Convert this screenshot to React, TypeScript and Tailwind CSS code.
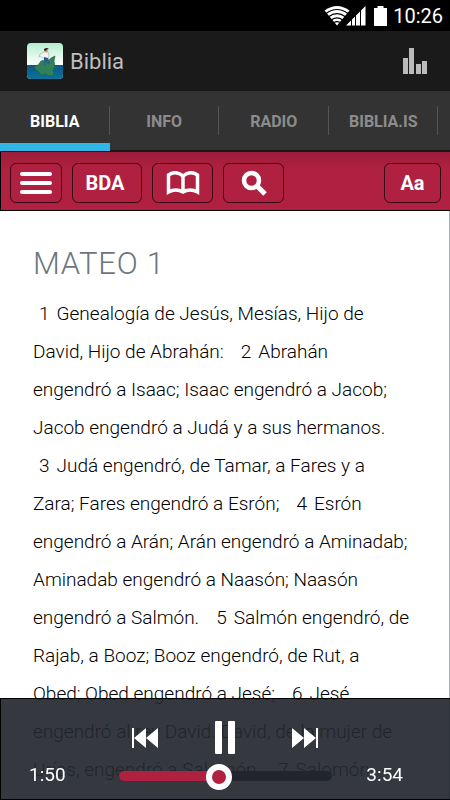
import { useState } from "react";

const tabs = ["BIBLIA", "INFO", "RADIO", "BIBLIA.IS"];

// Each line holds its pieces in order, numbers are verse markers
const lines: (string | number)[][] = [
  [1, "Genealogía de Jesús, Mesías, Hijo de"],
  ["David, Hijo de Abrahán:", 2, "Abrahán"],
  ["engendró a Isaac; Isaac engendró a Jacob;"],
  ["Jacob engendró a Judá y a sus hermanos."],
  [3, "Judá engendró, de Tamar, a Fares y a"],
  ["Zara; Fares engendró a Esrón;", 4, "Esrón"],
  ["engendró a Arán; Arán engendró a Aminadab;"],
  ["Aminadab engendró a Naasón; Naasón"],
  ["engendró a Salmón.", 5, "Salmón engendró, de"],
  ["Rajab, a Booz; Booz engendró, de Rut, a"],
  ["Obed; Obed engendró a Jesé;", 6, "Jesé"],
  ["engendró al rey David. David, de la mujer de"],
  ["Urías, engendró a Salomón.", 7, "Salomón"],
  ["engendró a Roboán; Roboán engendró a"],
];

const toolButton =
  "flex h-10 items-center justify-center rounded-md border border-[#3a0814] bg-[#b02040] text-xl font-bold text-white";

const StatusBar = () => (
  <div className="flex h-[31px] shrink-0 items-center justify-end bg-black pr-[7px] text-white">
    <svg width="26" height="20" viewBox="0 0 26 20" fill="none" stroke="#fff" aria-hidden="true">
      <path d="M13 19.5 0.5 4.5Q13 -4.5 25.5 4.5Z" fill="#fff" stroke="none" />
      <path d="M2 7.5Q13 -0.5 24 7.5M4.5 10.7Q13 4.5 21.5 10.7M7.5 13.8Q13 10 18.5 13.8M10 16.6Q13 14.8 16 16.6" stroke="#000" strokeWidth="1.2" />
    </svg>
    <svg className="-ml-1" width="20" height="20" viewBox="0 0 20 20" aria-hidden="true">
      <path d="M0 19.5 19.5 0V19.5Z" fill="#fff" />
      <path d="M5.5 10V20M9.5 6V20M14.5 2V20" stroke="#000" strokeWidth="1" />
    </svg>
    <svg className="ml-2" width="13" height="20" viewBox="0 0 13 20" fill="#fff" aria-hidden="true">
      <path d="M3.5 0h6v2H13v18H0V2h3.500z" />
    </svg>
    <span className="ml-[6px] text-xl">10:26</span>
  </div>
);

const AppIcon = () => (
  <svg className="rounded-sm" width="36" height="36" viewBox="0 0 36 36" aria-hidden="true">
    <defs>
      <linearGradient id="sky" x1="0" y1="0" x2="0" y2="1">
        <stop offset="0" stopColor="#b4edcf" />
        <stop offset="0.6" stopColor="#fff" />
      </linearGradient>
      <linearGradient id="sea" x1="0" y1="0" x2="0" y2="1">
        <stop offset="0" stopColor="#075a86" />
        <stop offset="1" stopColor="#0f7099" />
      </linearGradient>
    </defs>
    <path d="M0 0h36v36H0z" fill="url(#sky)" />
    <path d="M0 22h36v14H0z" fill="url(#sea)" />
    <path d="m7 24 4-2 3-4 4-1 3 1 3-3 4-2-1 5 1 5-2 4 1 5-4 1-5-2-4 1-3-4-2-1z" fill="#2f8258" stroke="#1e6544" strokeWidth="0.6" />
    <path d="m17 9 4 0 1 4-1 3-4-1-1 0-3-2-1 1 1-3z" fill="#f4f4f4" stroke="#8e9495" strokeWidth="0.5" />
    <path d="m17 14 4 1 2 5-1 2-3-4-1 5-1-1z" fill="#2a5c8d" />
    <circle cx="19" cy="7.500" r="1.700" fill="#c7906b" />
    <path d="M17 7Q17 5 20 5L22 6 20 6.500 18 8z" fill="#2a1c17" />
  </svg>
);

const App = () => {
  const [activeTab, setActiveTab] = useState("BIBLIA");
  const [playing, setPlaying] = useState(true);
  const [position, setPosition] = useState(110);
  const percent = (position / 234) * 100;

  return (
    <div className="flex h-screen flex-col overflow-hidden bg-white font-[Roboto,sans-serif]">
      <StatusBar />
      <header className="flex h-[60px] shrink-0 items-center bg-[#1a1a1a] pr-[22px] pl-[27px]">
        <AppIcon />
        <h1 className="ml-[7px] text-[22px] text-[#bebebe]">Biblia</h1>
        <button className="ml-auto" aria-label="Ecualizador">
          <svg width="26" height="28" viewBox="0 0 26 28" fill="#bbb">
            <path d="M1 11h5v16H1zM7 1h5v26H7zM14 17h5v10h-5zM20 14h5v13h-5z" />
          </svg>
        </button>
      </header>

      <nav className="flex h-[61px] shrink-0 border-b-2 border-[#181818] bg-[#333] pr-3">
        {tabs.map((tab) => (
          <button
            key={tab}
            onClick={() => setActiveTab(tab)}
            className={`relative flex flex-1 items-center justify-center pt-[3px] text-base font-bold ${
              tab === activeTab ? "text-white" : "text-[#8c8c8c]"
            }`}
          >
            {tab}
            <span className="absolute inset-y-[15px] right-0 w-px bg-[#555]" />
            {tab === activeTab && <span className="absolute inset-x-0 -bottom-px h-2 bg-[#33b5e5]" />}
          </button>
        ))}
      </nav>

      <div className="flex h-[59px] shrink-0 items-center gap-[10px] border-b border-l border-black bg-linear-to-b from-[#9c1d39] to-[#b02040] to-30% pt-[3px] pr-[9px] pl-[9px]">
        <button className={`${toolButton} w-[52px]`} aria-label="Menú">
          <svg width="32" height="24" viewBox="0 0 32 24" stroke="#fff" strokeWidth="4" strokeLinecap="round">
            <path d="M2 3h28M2 12h28M2 21h28" />
          </svg>
        </button>
        <button className={`${toolButton} w-[70px] pr-1`}>BDA</button>
        <button className={`${toolButton} w-[61px]`} aria-label="Libros">
          <svg width="34" height="24" viewBox="0 0 34 24" fill="none" stroke="#fff" strokeWidth="3.500">
            <path d="M17 5Q10-1 2.500 4V21Q10 17 17 21Q24 17 31.500 21V4Q24-1 17 5V21" />
          </svg>
        </button>
        <button className={`${toolButton} w-[61px]`} aria-label="Buscar">
          <svg width="26" height="26" viewBox="0 0 26 26" fill="none" stroke="#fff">
            <circle cx="10.500" cy="10.500" r="7.500" strokeWidth="4.500" />
            <path d="m15.500 15.500 8.500 8.500" strokeWidth="5" />
          </svg>
        </button>
        <button className={`${toolButton} ml-auto w-[57px]`}>Aa</button>
      </div>

      <main className="min-h-0 flex-1 overflow-hidden border-r border-[#aab4c0] px-[33px]">
        <h2 className="mt-[33px] text-[31px] leading-10 font-light tracking-wide text-[#6c7681]">MATEO 1</h2>
        <div className="mt-[11px] text-[19px] leading-[38px] font-light whitespace-nowrap text-black">
          {lines.map((parts, i) => (
            <p key={i} className="flex">
              {parts.map((part) =>
                typeof part === "number" ? (
                  <span key={part} className="mr-[7px] ml-[17px] first:ml-[6px]">
                    {part}
                  </span>
                ) : (
                  <span key={part}>{part}</span>
                )
              )}
            </p>
          ))}
        </div>
      </main>

      <footer className="fixed inset-x-0 bottom-0 border-y border-l border-black bg-[#24272f]/92 text-white">
        <div className="flex h-[62px] items-end justify-center pr-[2px] pb-1">
          <button aria-label="Anterior">
            <svg width="28" height="38" viewBox="0 0 28 38" fill="#fff">
              <path d="M1 9h2v20H1zM3 19 15 9v20zM15 19 27 9v20z" />
            </svg>
          </button>
          <button className="mx-[54px]" aria-label={playing ? "Pausa" : "Reproducir"} onClick={() => setPlaying(!playing)}>
            <svg width="24" height="38" viewBox="0 0 24 38" fill="#fff">
              {playing ? (
                <>
                  <rect x="2" y="2" width="7" height="33" rx="1" />
                  <rect x="15" y="2" width="7" height="33" rx="1" />
                </>
              ) : (
                <path d="M2 3 22 19 2 35z" />
              )}
            </svg>
          </button>
          <button aria-label="Siguiente">
            <svg width="28" height="38" viewBox="0 0 28 38" fill="#fff">
              <path d="M25 9h2v20h-2zM1 9l12 10L1 29zM13 9l12 10-12 10z" />
            </svg>
          </button>
        </div>
        <div className="flex h-[38px] items-start pr-[47px] pl-7 text-[19px] leading-7">
          <span className="w-[90px]">1:50</span>
          <div className="relative h-8 flex-1">
            <div className="absolute inset-x-0 top-[10px] h-[10px] overflow-hidden rounded-full bg-[#22252d]">
              <div className="h-full bg-[#b02040]" style={{ width: `${percent}%` }} />
            </div>
            <div
              className="absolute top-[3px] size-[26px] -translate-x-1/2 rounded-full border-[6px] border-white bg-[#b02040]"
              style={{ left: `${percent}%` }}
            />
            <input
              type="range"
              min={0}
              max={234}
              value={position}
              onChange={(e) => setPosition(Number(e.target.value))}
              aria-label="Posición"
              className="absolute inset-0 w-full cursor-pointer opacity-0"
            />
          </div>
          <span className="ml-[34px]">3:54</span>
        </div>
      </footer>
    </div>
  );
};

export default App;
